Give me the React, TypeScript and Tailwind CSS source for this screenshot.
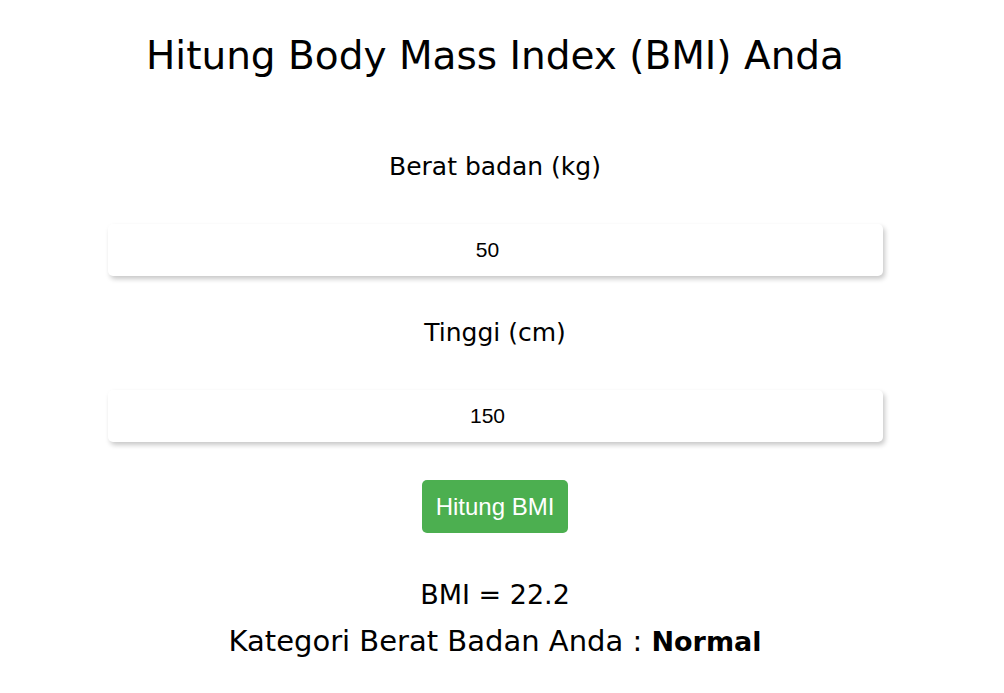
export default function App() {
  return (
    <div className="min-h-screen bg-white font-['DejaVu_Sans',sans-serif] text-black">
      <div className="w-[990px] flex flex-col items-center">
        <h1 className="mt-[28px] h-[56px] text-[39px] leading-[56px] font-normal">
          Hitung Body Mass Index (BMI) Anda
        </h1>

        <label className="mt-[68px] h-[30px] text-[25px] leading-[30px]">Berat badan (kg)</label>
        <input
          type="number"
          defaultValue="50"
          className="mt-[42px] h-[52px] w-[775px] rounded-[5px] bg-white text-center font-['Liberation_Sans',sans-serif] text-[21px] shadow-[2px_3px_5px_rgba(0,0,0,0.22)] outline-none"
        />

        <label className="mt-[42px] h-[30px] text-[25px] leading-[30px]">Tinggi (cm)</label>
        <input
          type="number"
          defaultValue="150"
          className="mt-[42px] h-[52px] w-[775px] rounded-[5px] bg-white text-center font-['Liberation_Sans',sans-serif] text-[21px] shadow-[2px_3px_5px_rgba(0,0,0,0.22)] outline-none"
        />

        <button className="mt-[38px] h-[53px] rounded-[5px] bg-[#4caf50] px-[14px] font-['Liberation_Sans',sans-serif] text-[24px] text-white">
          Hitung BMI
        </button>

        <p className="mt-[44px] text-[27px] leading-[36px]">BMI = 22.2</p>
        <p className="mt-[10px] text-[29px] leading-[36px]">
          Kategori Berat Badan Anda : <span className="text-[27px] font-bold">Normal</span>
        </p>
      </div>
    </div>
  );
}
